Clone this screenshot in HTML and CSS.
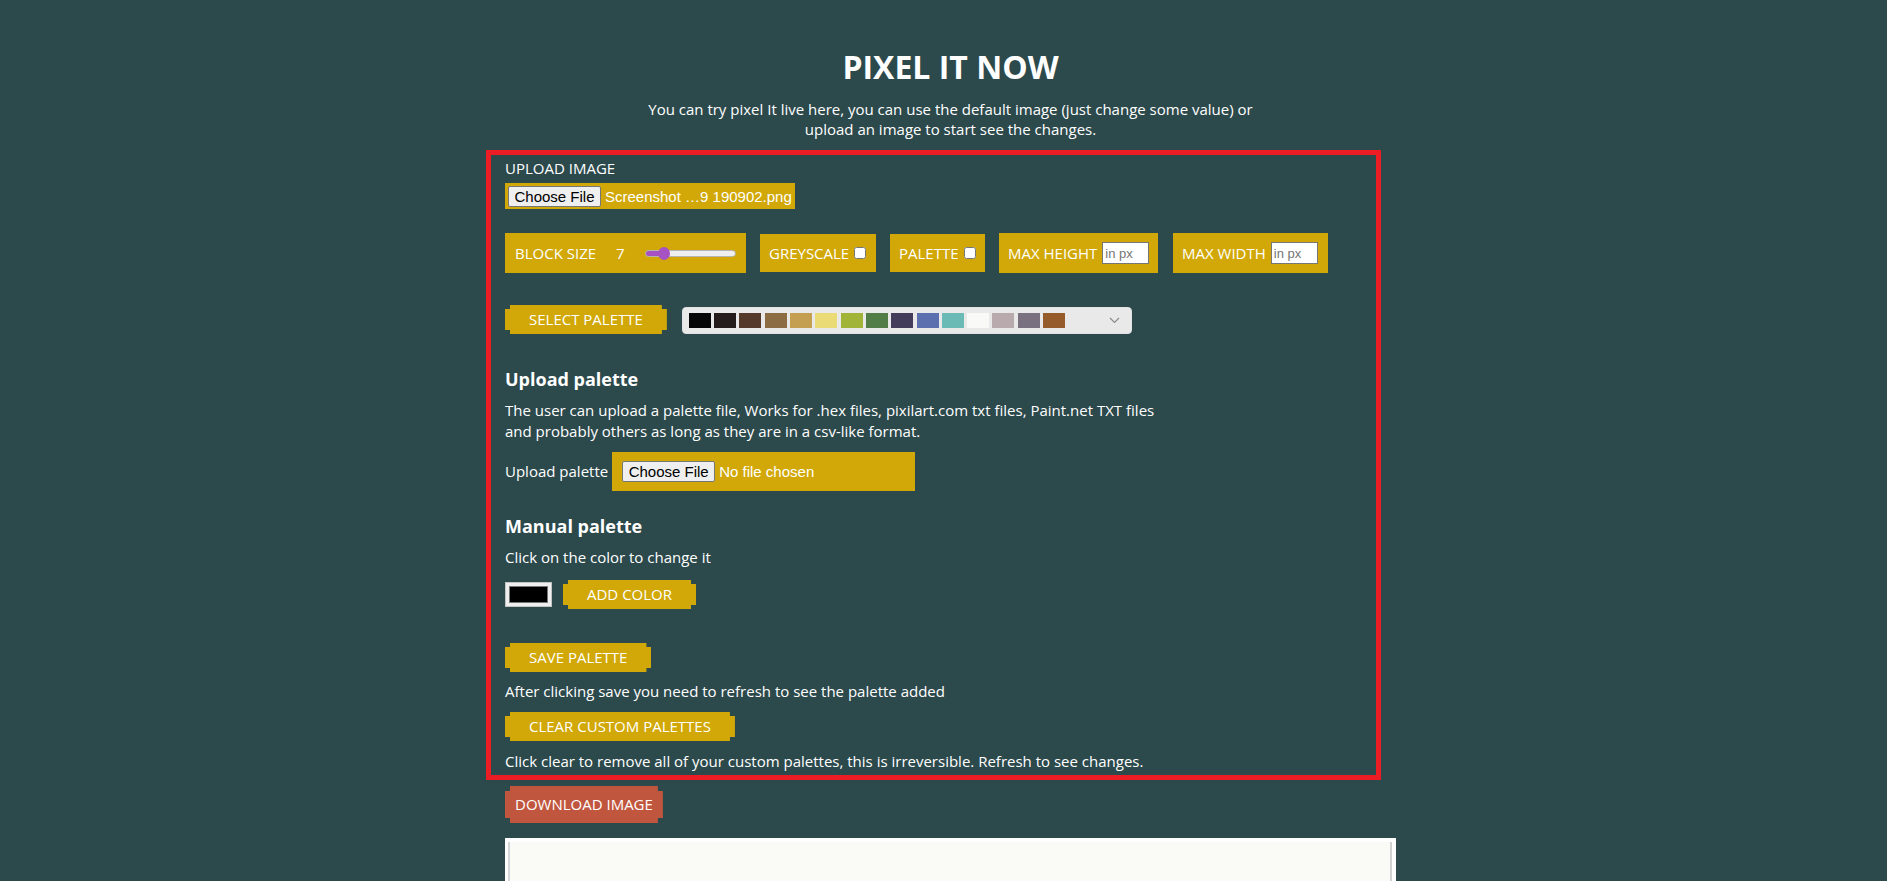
FILE: index.html
```html
<!DOCTYPE html>
<html lang="en">
<head>
<meta charset="utf-8">
<title>Pixel It Now</title>
<link rel="stylesheet" href="styles.css">
</head>
<body>
<main class="page">
  <h1 class="title">PIXEL IT NOW</h1>
  <p class="intro">You can try pixel It live here, you can use the default image (just change some value) or<br>upload an image to start see the changes.</p>

  <section class="panel">
    <div class="label-line">UPLOAD IMAGE</div>
    <div class="file-field file-field--image">
      <span class="file-btn">Choose File</span>
      <span class="file-name">Screenshot …9 190902.png</span>
    </div>

    <div class="options">
      <div class="opt opt--block">
        <span class="opt-text">BLOCK SIZE</span>
        <span class="opt-value">7</span>
        <input class="range" type="range" min="1" max="40" value="7">
      </div>
      <label class="opt opt--grey">
        <span class="opt-text">GREYSCALE</span>
        <input class="check" type="checkbox">
      </label>
      <label class="opt opt--palette">
        <span class="opt-text">PALETTE</span>
        <input class="check" type="checkbox">
      </label>
      <label class="opt opt--maxh">
        <span class="opt-text">MAX HEIGHT</span>
        <input class="px-input" type="text" placeholder="in px">
      </label>
      <label class="opt opt--maxw">
        <span class="opt-text">MAX WIDTH</span>
        <input class="px-input" type="text" placeholder="in px">
      </label>
    </div>

    <div class="palette-row">
      <button class="btn">SELECT PALETTE</button>
      <div class="palette-select">
        <div class="swatches">
          <span class="sw sw1"></span><span class="sw sw2"></span><span class="sw sw3"></span><span class="sw sw4"></span><span class="sw sw5"></span><span class="sw sw6"></span><span class="sw sw7"></span><span class="sw sw8"></span><span class="sw sw9"></span><span class="sw sw10"></span><span class="sw sw11"></span><span class="sw sw12"></span><span class="sw sw13"></span><span class="sw sw14"></span><span class="sw sw15"></span>
        </div>
        <svg class="chevron" width="11" height="7" viewBox="0 0 11 7"><polyline points="1,1 5.5,5.5 10,1" fill="none" stroke="#8a8a8a" stroke-width="1.2"/></svg>
      </div>
    </div>

    <h3 class="sub-h sub-h--upload">Upload palette</h3>
    <p class="text text--after-h">The user can upload a palette file, Works for .hex files, pixilart.com txt files, Paint.net TXT files<br>and probably others as long as they are in a csv-like format.</p>
    <div class="upload-row">
      <span class="upload-label">Upload palette</span>
      <div class="file-field file-field--palette">
        <span class="file-btn">Choose File</span>
        <span class="file-name">No file chosen</span>
      </div>
    </div>

    <h3 class="sub-h sub-h--manual">Manual palette</h3>
    <p class="text text--after-h">Click on the color to change it</p>
    <div class="color-row">
      <div class="color-pick"><span class="color-chip"></span></div>
      <button class="btn">ADD COLOR</button>
    </div>

    <button class="btn btn--save">SAVE PALETTE</button>
    <p class="text text--after-btn">After clicking save you need to refresh to see the palette added</p>
    <button class="btn btn--clear">CLEAR CUSTOM PALETTES</button>
    <p class="text text--after-btn2">Click clear to remove all of your custom palettes, this is irreversible. Refresh to see changes.</p>
  </section>

  <button class="btn btn--download">DOWNLOAD IMAGE</button>

  <div class="preview"><div class="preview-inner"></div></div>
</main>
</body>
</html>
```

FILE: styles.css
```css
* { box-sizing: border-box; }

html, body {
  margin: 0;
  height: 100%;
  overflow: hidden;
}

body {
  background: #2c494c;
  color: #ffffff;
  font-family: "Open Sans", "DejaVu Sans", sans-serif;
  font-size: 15px;
  line-height: 21px;
}

.page {
  width: 905px;
  margin: 0 auto;
  padding-left: 14px;
}

.title {
  margin: 0;
  padding-top: 45px;
  font-size: 32px;
  line-height: 44px;
  font-weight: 700;
  text-align: center;
}

.intro {
  margin: 10px 0 0;
  line-height: 20px;
  text-align: center;
}

.panel {
  margin: 11px 0 0 -19px;
  width: 895px;
  border: 5px solid #ec1c24;
  padding: 3px 14px 3px;
}

.label-line { line-height: 20px; }

/* fake file inputs */
.file-field {
  display: flex;
  align-items: center;
  gap: 4px;
  background: #d1a807;
  font-family: "Liberation Sans", Arial, sans-serif;
  font-size: 15px;
  color: #fff;
  white-space: nowrap;
}
.file-field > * { flex-shrink: 0; }
.file-field--image {
  margin-top: 5px;
  width: 290px;
  height: 26px;
  padding: 0 3px;
}
.file-field--palette {
  width: 303px;
  height: 39px;
  padding: 0 10px;
}
.file-btn {
  display: inline-block;
  width: 93px;
  height: 21px;
  line-height: 19px;
  padding: 0;
  text-align: center;
  background: #efefef;
  color: #000;
  border: 1px solid #767676;
  border-radius: 2px;
  font-family: "Liberation Sans", Arial, sans-serif;
  font-size: 15px;
  white-space: nowrap;
}

/* option boxes */
.options {
  display: flex;
  align-items: center;
  gap: 14px;
  margin-top: 24px;
}
.opt {
  display: flex;
  align-items: center;
  background: #d1a807;
  color: #fff;
  height: 38px;
  padding: 0 9px 0 10px;
  white-space: nowrap;
}
.opt--block { width: 241px; height: 40px; padding: 0 10px; gap: 20px; }
.opt--grey { width: 116px; padding-left: 9px; }
.opt--palette { width: 95px; padding-left: 9px; }
.opt--maxh { width: 159px; height: 40px; padding-left: 9px; gap: 5px; }
.opt--maxw { width: 155px; height: 40px; padding-left: 9px; gap: 5px; margin-left: 1px; }

.opt-value { width: 9px; }

.check {
  margin: 0 0 0 5px;
  width: 12px;
  height: 12px;
}

.px-input {
  width: 47px;
  height: 22px;
  border: 1px solid #767676;
  padding: 1px 2px;
  font-family: "Liberation Sans", Arial, sans-serif;
  font-size: 13px;
  color: #000;
  background: #fff;
  outline: none;
}
.px-input::placeholder { color: #757575; }

.range {
  -webkit-appearance: none;
  appearance: none;
  width: 91px;
  height: 7px;
  margin: 0;
  border: 1px solid #b5b5b5;
  border-radius: 4px;
  background: linear-gradient(to right, #a652c2 0 18px, #efefef 18px);
}
.range::-webkit-slider-thumb {
  -webkit-appearance: none;
  appearance: none;
  width: 12px;
  height: 13px;
  border-radius: 50%;
  background: #a652c2;
  border: none;
}

/* pixel-notched buttons */
.btn {
  display: block;
  width: fit-content;
  height: 29px;
  padding: 0 24px;
  border: none;
  background: #d1a807;
  color: #fff;
  font-family: "Open Sans", "DejaVu Sans", sans-serif;
  font-size: 15px;
  line-height: 29px;
  white-space: nowrap;
  clip-path: polygon(5px 0, calc(100% - 5px) 0, calc(100% - 5px) 4px, 100% 4px, 100% calc(100% - 4px), calc(100% - 5px) calc(100% - 4px), calc(100% - 5px) 100%, 5px 100%, 5px calc(100% - 4px), 0 calc(100% - 4px), 0 4px, 5px 4px);
}

.palette-row {
  display: flex;
  align-items: flex-end;
  gap: 15px;
  margin-top: 32px;
}
.palette-select {
  display: flex;
  align-items: center;
  width: 450px;
  height: 27px;
  padding: 0 11px 0 6px;
  background: #e9e9e9;
  border: 1px solid #e2e2e2;
  border-radius: 4px;
}
.swatches {
  display: flex;
  gap: 3.3px;
}
.sw { width: 22px; height: 15px; }
.sw1 { background: #070707; }
.sw2 { background: #251c1c; }
.sw3 { background: #553a2b; }
.sw4 { background: #8b6c43; }
.sw5 { background: #c49f52; }
.sw6 { background: #eadb76; }
.sw7 { background: #a2b437; }
.sw8 { background: #527d47; }
.sw9 { background: #433c5a; }
.sw10 { background: #5c70b0; }
.sw11 { background: #6bbab6; }
.sw12 { background: #f9f9f7; }
.sw13 { background: #b9aaae; }
.sw14 { background: #79717f; }
.sw15 { background: #965b2b; }
.chevron { margin-left: auto; }

.sub-h {
  margin: 0;
  font-size: 18px;
  line-height: 24px;
  font-weight: 700;
}
.sub-h--upload { margin-top: 33px; }
.sub-h--manual { margin-top: 23px; }

.text { margin: 0; line-height: 21px; }
.text--after-h { margin-top: 9px; }
.text--after-btn { margin-top: 9px; }
.text--after-btn2 { margin-top: 10px; }

.upload-row {
  display: flex;
  align-items: center;
  gap: 4px;
  margin-top: 10px;
}

.color-row {
  display: flex;
  align-items: center;
  gap: 11px;
  margin-top: 12px;
}
.color-pick {
  width: 47px;
  height: 25px;
  padding: 3px;
  background: #efefef;
  border: 1px solid #c4c4c4;
}
.color-chip {
  display: block;
  width: 100%;
  height: 100%;
  background: #000;
  border: 1px solid #777;
}

.btn--save { margin-top: 34px; }
.btn--clear { margin-top: 10px; }

.btn--download {
  margin-top: 6px;
  height: 37px;
  line-height: 37px;
  padding: 0 10px;
  background: #c1563e;
  clip-path: polygon(5px 0, calc(100% - 5px) 0, calc(100% - 5px) 5px, 100% 5px, 100% calc(100% - 5px), calc(100% - 5px) calc(100% - 5px), calc(100% - 5px) 100%, 5px 100%, 5px calc(100% - 5px), 0 calc(100% - 5px), 0 5px, 5px 5px);
}

.preview {
  margin-top: 15px;
  width: 891px;
  height: 60px;
  background: #ffffff;
  padding: 4px 4px 0 3px;
}
.preview-inner {
  height: 100%;
  background: #fafaf6;
  border-left: 2px solid #d6d6d6;
  border-right: 2px solid #d2d2d2;
}
```
